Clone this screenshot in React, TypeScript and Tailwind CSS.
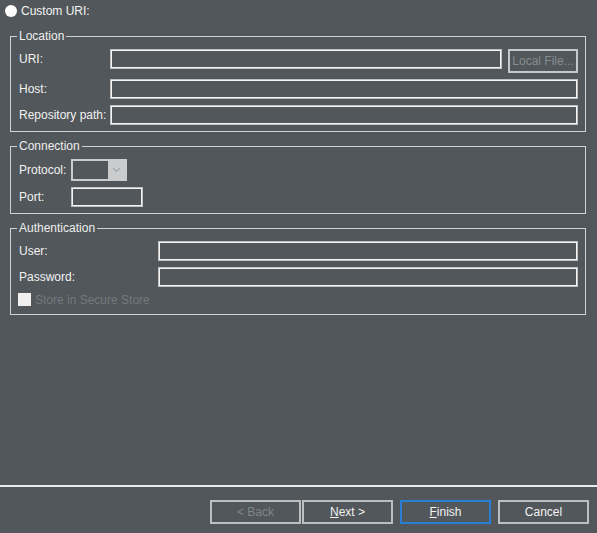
const labelCls = "text-[12px] leading-[16px] text-[#f2f2f2] whitespace-nowrap";
const inputCls =
  "h-[20px] border border-[#bfc1c2] shadow-[inset_0_0_0_1px_#f4f4f4] bg-transparent";

function Group({ title, children, className = "" }: { title: string; children: React.ReactNode; className?: string }) {
  return (
    <fieldset className={`ml-[10px] mr-[11px] border border-[#d0d2d3] pl-[8px] pr-[7px] ${className}`}>
      <legend className="-ml-[2px] px-[2px] text-[12px] leading-[16px] text-[#eeeeee]">{title}</legend>
      {children}
    </fieldset>
  );
}

function Row({ label, labelW, children }: { label: string; labelW: string; children: React.ReactNode }) {
  return (
    <div className="flex items-center">
      <div className={`${labelW} shrink-0 ${labelCls}`}>{label}</div>
      {children}
    </div>
  );
}

function WizButton({ children, disabled, focused }: { children: React.ReactNode; disabled?: boolean; focused?: boolean }) {
  return (
    <div
      className={`w-[91px] h-[24px] flex items-center justify-center text-[12px] border-2 ${
        focused ? "border-[#2a7fd4]" : "border-[#bcbebf]"
      } ${disabled ? "text-[#80868a]" : "text-[#f2f2f2]"}`}
    >
      {children}
    </div>
  );
}

export default function App() {
  return (
    <div
      className="w-full h-[533px] bg-[#51575a] flex flex-col select-none"
      style={{ fontFamily: '"Liberation Sans", Arial, sans-serif' }}
    >
      <div className="flex-1">
        <div className="flex items-center pt-[2px] pl-[5px] gap-[4px] h-[19px]">
          <div className="w-[12px] h-[12px] rounded-full bg-white" />
          <span className="text-[12px] leading-[16px] text-[#f4f4f4]">Custom URI:</span>
        </div>

        <Group title="Location" className="mt-[9px] pt-[5px] pb-[6px]">
          <div className="flex flex-col gap-[6px]">
            <div className="flex items-start">
              <div className={`w-[91px] shrink-0 pt-[2px] ${labelCls}`}>URI:</div>
              <div className={`flex-1 ${inputCls}`} />
              <div className="ml-[6px] w-[70px] h-[24px] border-2 border-[#c6c8c9] flex items-center justify-center text-[12px] text-[#878c8f] whitespace-nowrap">
                Local File...
              </div>
            </div>
            <Row label="Host:" labelW="w-[91px]">
              <div className={`flex-1 ${inputCls}`} />
            </Row>
            <Row label="Repository path:" labelW="w-[91px]">
              <div className={`flex-1 ${inputCls}`} />
            </Row>
          </div>
        </Group>

        <Group title="Connection" className="mt-[6px] pt-[5px] pb-[6px]">
          <div className="flex flex-col gap-[6px]">
            <Row label="Protocol:" labelW="w-[52px]">
              <div className="w-[56px] h-[22px] bg-[#cbcccd] p-[2px] flex">
                <div className="w-[35px] h-full bg-[#51575a]" />
                <div className="flex-1 flex items-center justify-center">
                  <svg width="9" height="6" viewBox="0 0 9 6">
                    <path d="M1 1 L4.5 4.5 L8 1" fill="none" stroke="#a3a6a8" strokeWidth="1.2" />
                  </svg>
                </div>
              </div>
            </Row>
            <Row label="Port:" labelW="w-[52px]">
              <div className={`w-[72px] ${inputCls}`} />
            </Row>
          </div>
        </Group>

        <Group title="Authentication" className="mt-[6px] pt-[5px] pb-[8px]">
          <div className="flex flex-col gap-[6px]">
            <Row label="User:" labelW="w-[139px]">
              <div className={`flex-1 ${inputCls}`} />
            </Row>
            <Row label="Password:" labelW="w-[139px]">
              <div className={`flex-1 ${inputCls}`} />
            </Row>
            <div className="flex items-center h-[13px] -ml-[1px] gap-[4px]">
              <div className="w-[13px] h-[13px] bg-[#f0f0f0]" />
              <span className="text-[12px] leading-[16px] text-[#737a7d]">Store in Secure Store</span>
            </div>
          </div>
        </Group>
      </div>

      <div className="h-[2px] bg-[#e9eaea]" />

      <div className="h-[46px] flex items-start justify-end pt-[13px] pr-[8px]">
        <WizButton disabled>&lt; Back</WizButton>
        <div className="ml-[1px]">
          <WizButton>
            <span>
              <span className="underline">N</span>ext &gt;
            </span>
          </WizButton>
        </div>
        <div className="ml-[7px]">
          <WizButton focused>
            <span>
              <span className="underline">F</span>inish
            </span>
          </WizButton>
        </div>
        <div className="ml-[7px]">
          <WizButton>Cancel</WizButton>
        </div>
      </div>
    </div>
  );
}
